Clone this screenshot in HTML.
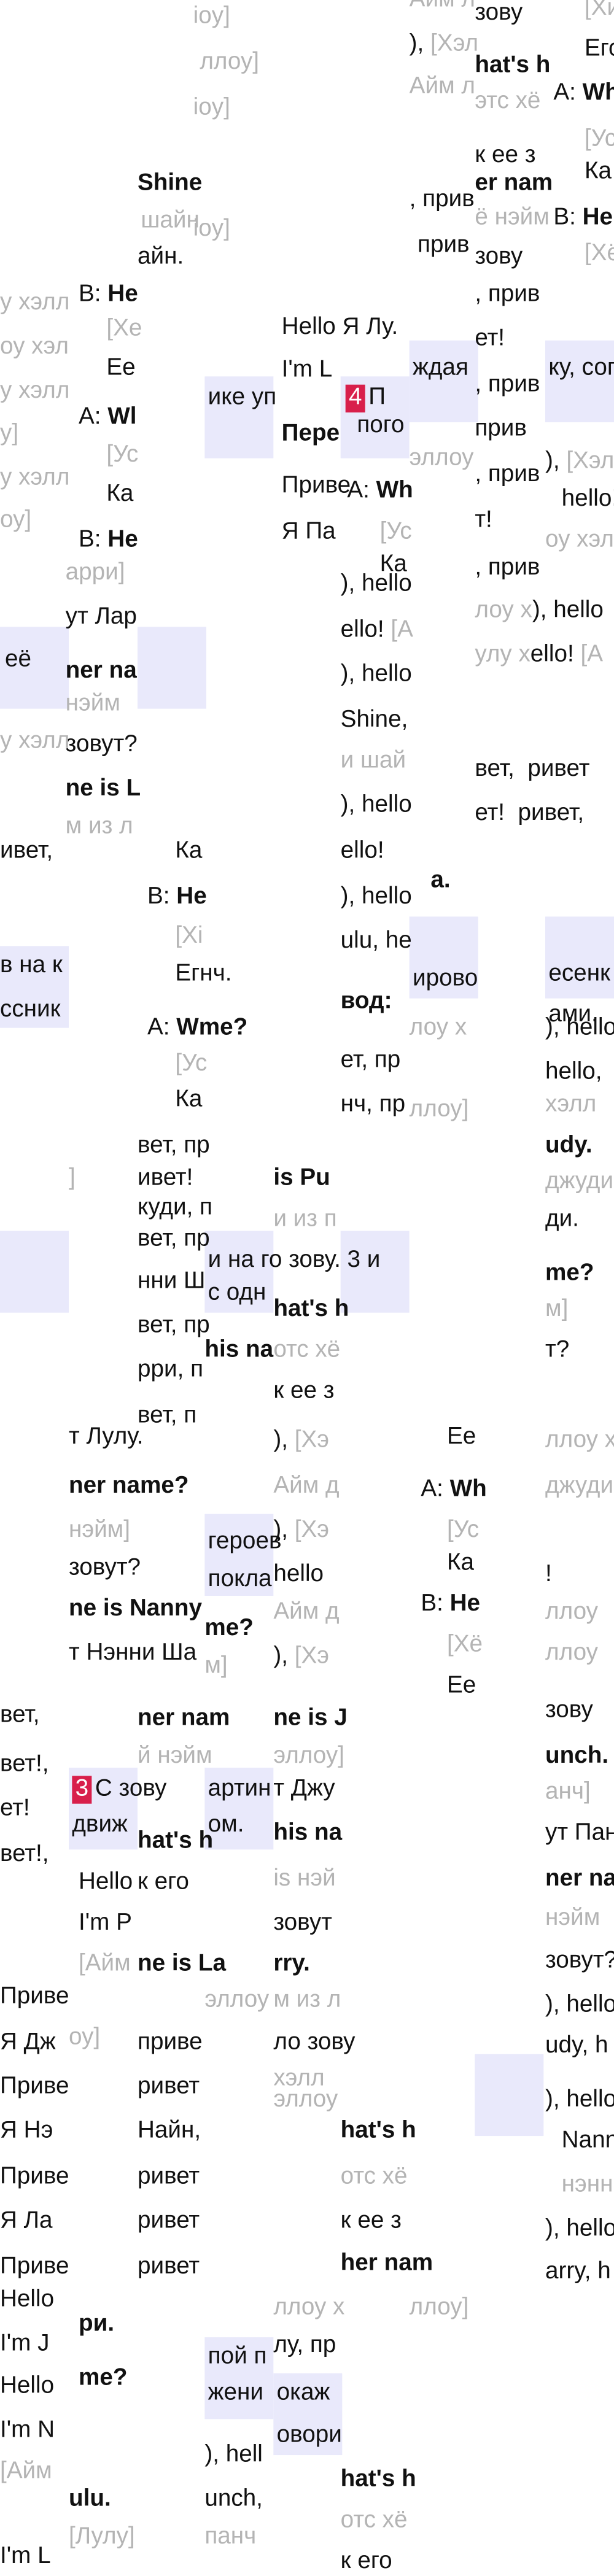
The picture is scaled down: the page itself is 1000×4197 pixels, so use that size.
<!DOCTYPE html>
<html><head><meta charset="utf-8"><style>
html,body{margin:0;padding:0;background:#fff;}
body{width:1000px;height:4178px;overflow:hidden;position:relative;}
#w{position:absolute;left:0;top:0;width:375px;height:1567px;transform:scale(2.6667);transform-origin:0 0;font-family:"Liberation Sans","Noto Sans CJK SC",sans-serif;font-size:14.5px;line-height:17px;color:#111;}
#w i{position:absolute;font-style:normal;white-space:nowrap;}
#w .g{color:#b4b4b4;}
#w .b{font-weight:bold;}
#w .bx{position:absolute;background:#e9e9fb;width:42px;height:50px;}
#w .r{display:inline-block;background:#d81f4b;color:#fff;padding:0 2px;margin-right:2px;}
</style></head><body><div id="w">
<div class="bx" style="left:0;top:383px"></div>
<div class="bx" style="left:84px;top:383px"></div>
<div class="bx" style="left:250px;top:208px"></div>
<div class="bx" style="left:333px;top:208px"></div>
<div class="bx" style="left:125px;top:230px"></div>
<div class="bx" style="left:208px;top:230px"></div>
<div class="bx" style="left:0;top:578px"></div>
<div class="bx" style="left:250px;top:560px"></div>
<div class="bx" style="left:333px;top:560px"></div>
<div class="bx" style="left:0;top:752px"></div>
<div class="bx" style="left:125px;top:752px"></div>
<div class="bx" style="left:208px;top:752px"></div>
<div class="bx" style="left:125px;top:925px"></div>
<div class="bx" style="left:42px;top:1080px"></div>
<div class="bx" style="left:125px;top:1080px"></div>
<div class="bx" style="left:290px;top:1255px"></div>
<div class="bx" style="left:125px;top:1428px"></div>
<div class="bx" style="left:167px;top:1450px"></div>

<i class="g" style="left:118px;top:2px">ioy]</i>
<i class="g" style="left:122px;top:30px">ллоу]</i>
<i class="g" style="left:118px;top:58px">ioy]</i>
<i class="b" style="left:84px;top:104px">Shine</i>
<i class="g" style="left:86px;top:127px">шайн</i>
<i class="g" style="left:118px;top:132px">ioy]</i>
<i style="left:84px;top:149px">айн.</i>
<i style="left:48px;top:172px">B: <b>He</b></i>
<i class="g" style="left:65px;top:193px">[Хе</i>
<i style="left:65px;top:217px">Ее</i>
<i style="left:48px;top:247px">A: <b>Wl</b></i>
<i class="g" style="left:65px;top:270px">[Ус</i>
<i style="left:65px;top:294px">Ка</i>
<i style="left:48px;top:322px">B: <b>He</b></i>
<i class="g" style="left:40px;top:342px">арри]</i>
<i style="left:40px;top:369px">ут Лар</i>
<i style="left:3px;top:395px">её</i>
<i class="b" style="left:40px;top:402px">ner na</i>
<i class="g" style="left:40px;top:422px">нэйм</i>
<i style="left:40px;top:447px">зовут?</i>
<i class="b" style="left:40px;top:474px">ne is L</i>
<i class="g" style="left:40px;top:497px">м из л</i>
<i class="g" style="left:0;top:177px">у хэлл</i>
<i class="g" style="left:0;top:204px">оу хэл</i>
<i class="g" style="left:0;top:231px">у хэлл</i>
<i class="g" style="left:0;top:257px">у]</i>
<i class="g" style="left:0;top:284px">у хэлл</i>
<i class="g" style="left:0;top:310px">оу]</i>
<i class="g" style="left:0;top:445px">у хэлл</i>

<i class="g" style="left:250px;top:-8px">Айм л</i>
<i style="left:290px;top:0">зову</i>
<i class="g" style="left:357px;top:-3px">[Хи</i>
<i style="left:250px;top:19px">), <span class="g">[Хэл</span></i>
<i style="left:357px;top:22px">Его</i>
<i class="b" style="left:290px;top:32px">hat's h</i>
<i class="g" style="left:250px;top:45px">Айм л</i>
<i class="g" style="left:290px;top:54px">этс хё</i>
<i style="left:338px;top:49px">A: <b>Wh</b></i>
<i class="g" style="left:357px;top:77px">[Ус</i>
<i style="left:290px;top:87px">к ее з</i>
<i style="left:357px;top:97px">Ка</i>
<i class="b" style="left:290px;top:104px">er nam</i>
<i style="left:250px;top:114px">, прив</i>
<i class="g" style="left:290px;top:125px">ё нэйм</i>
<i style="left:338px;top:125px">B: <b>He</b></i>
<i style="left:255px;top:142px">прив</i>
<i style="left:290px;top:149px">зову</i>
<i class="g" style="left:357px;top:147px">[Хё</i>
<i style="left:290px;top:172px">, прив</i>
<i style="left:172px;top:192px">Hello Я Лу.</i>
<i style="left:290px;top:199px">ет!</i>
<i style="left:172px;top:218px">I'm L</i>
<i style="left:252px;top:217px">ждая</i>
<i style="left:335px;top:217px">ку, сог</i>
<i style="left:127px;top:235px">ике уп</i>
<i style="left:211px;top:235px"><span class="r">4</span>П</i>
<i style="left:218px;top:252px">пого</i>
<i style="left:290px;top:227px">, прив</i>
<i style="left:290px;top:254px">прив</i>
<i class="b" style="left:172px;top:257px">Пере</i>
<i class="g" style="left:250px;top:272px">эллоу</i>
<i style="left:333px;top:274px">), <span class="g">[Хэл</span></i>
<i style="left:290px;top:282px">, прив</i>
<i style="left:172px;top:289px">Приве</i>
<i style="left:212px;top:292px">A: <b>Wh</b></i>
<i style="left:343px;top:297px">hello!</i>
<i style="left:290px;top:310px">т!</i>
<i style="left:172px;top:317px">Я Па</i>
<i class="g" style="left:232px;top:317px">[Ус</i>
<i class="g" style="left:333px;top:322px">оу хэл</i>
<i style="left:232px;top:337px">Ка</i>
<i style="left:290px;top:339px">, прив</i>
<i style="left:208px;top:349px">), hello</i>
<i style="left:290px;top:365px"><span class="g">лоу х</span>), hello</i>
<i style="left:208px;top:377px">ello! <span class="g">[А</span></i>
<i style="left:290px;top:392px"><span class="g">улу х</span>ello! <span class="g">[А</span></i>
<i style="left:208px;top:404px">), hello</i>
<i style="left:208px;top:432px">Shine,</i>
<i class="g" style="left:208px;top:457px">и шай</i>
<i style="left:290px;top:462px">вет, &nbsp;ривет</i>
<i style="left:208px;top:484px">), hello</i>
<i style="left:290px;top:489px">ет! &nbsp;ривет,</i>
<i style="left:208px;top:512px">ello!</i>
<i class="b" style="left:263px;top:530px">а.</i>

<i style="left:0;top:512px">ивет,</i>
<i style="left:107px;top:512px">Ка</i>
<i style="left:208px;top:540px">), hello</i>
<i style="left:90px;top:540px">B: <b>He</b></i>
<i class="g" style="left:107px;top:564px">[Хі</i>
<i style="left:208px;top:567px">ulu, he</i>
<i style="left:107px;top:587px">Егнч.</i>
<i style="left:0;top:582px">в на к</i>
<i style="left:0;top:609px">ссник</i>
<i style="left:252px;top:590px">ирово</i>
<i style="left:335px;top:587px">есенк</i>
<i style="left:335px;top:612px">ами.</i>
<i class="b" style="left:208px;top:604px">вод:</i>
<i style="left:90px;top:620px">A: <b>Wme?</b></i>
<i class="g" style="left:250px;top:620px">лоу х</i>
<i style="left:333px;top:620px">), hello</i>
<i class="g" style="left:107px;top:642px">[Ус</i>
<i style="left:208px;top:640px">ет, пр</i>
<i style="left:333px;top:647px">hello,</i>
<i style="left:107px;top:664px">Ка</i>
<i style="left:208px;top:667px">нч, пр</i>
<i class="g" style="left:250px;top:670px">ллоу]</i>
<i class="g" style="left:333px;top:667px">хэлл</i>
<i class="g" style="left:42px;top:712px">]</i>
<i style="left:84px;top:692px">вет, пр</i>
<i class="b" style="left:333px;top:692px">udy.</i>
<i style="left:84px;top:712px">ивет!</i>
<i class="b" style="left:167px;top:712px">is Pu</i>
<i class="g" style="left:333px;top:714px">джуди</i>
<i style="left:84px;top:730px">куди, п</i>
<i class="g" style="left:167px;top:737px">и из п</i>
<i style="left:333px;top:737px">ди.</i>
<i style="left:127px;top:762px">и на го зову. 3 и</i>
<i style="left:127px;top:782px">с одн</i>
<i style="left:84px;top:749px">вет, пр</i>
<i class="b" style="left:333px;top:770px">me?</i>
<i style="left:84px;top:775px">нни Ш</i>
<i class="b" style="left:167px;top:792px">hat's h</i>
<i class="g" style="left:333px;top:792px">м]</i>
<i style="left:84px;top:802px">вет, пр</i>
<i class="b" style="left:125px;top:817px">his na</i>
<i class="g" style="left:167px;top:817px">отс хё</i>
<i style="left:333px;top:817px">т?</i>
<i style="left:84px;top:829px">рри, п</i>
<i style="left:167px;top:842px">к ее з</i>
<i style="left:84px;top:857px">вет, п</i>
<i style="left:42px;top:870px">т Лулу.</i>
<i style="left:167px;top:872px">), <span class="g">[Хэ</span></i>
<i style="left:273px;top:870px">Ее</i>
<i class="g" style="left:333px;top:872px">ллоу х</i>
<i class="b" style="left:42px;top:900px">ner name?</i>
<i class="g" style="left:167px;top:900px">Айм д</i>
<i style="left:257px;top:902px">A: <b>Wh</b></i>
<i class="g" style="left:333px;top:900px">джуди</i>
<i style="left:127px;top:934px">героев</i>
<i style="left:127px;top:957px">покла</i>
<i class="g" style="left:42px;top:927px">нэйм]</i>
<i style="left:167px;top:927px">), <span class="g">[Хэ</span></i>
<i class="g" style="left:273px;top:927px">[Ус</i>
<i style="left:42px;top:950px">зовут?</i>
<i style="left:167px;top:954px">hello</i>
<i style="left:273px;top:947px">Ка</i>
<i style="left:333px;top:954px">!</i>
<i class="b" style="left:42px;top:975px">ne is Nanny</i>
<i class="b" style="left:125px;top:987px">me?</i>
<i class="g" style="left:167px;top:977px">Айм д</i>
<i style="left:257px;top:972px">B: <b>He</b></i>
<i class="g" style="left:333px;top:977px">ллоу</i>
<i style="left:42px;top:1002px">т Нэнни Ша</i>
<i class="g" style="left:125px;top:1010px">м]</i>
<i style="left:167px;top:1004px">), <span class="g">[Хэ</span></i>
<i class="g" style="left:273px;top:997px">[Хё</i>
<i class="g" style="left:333px;top:1002px">ллоу</i>
<i style="left:273px;top:1022px">Ее</i>
<i style="left:0;top:1040px">вет,</i>
<i class="b" style="left:84px;top:1042px">ner nam</i>
<i class="b" style="left:167px;top:1042px">ne is J</i>
<i style="left:333px;top:1037px">зову</i>
<i class="g" style="left:84px;top:1065px">й нэйм</i>
<i class="g" style="left:167px;top:1065px">эллоу]</i>
<i class="b" style="left:333px;top:1065px">unch.</i>
<i style="left:0;top:1070px">вет!,</i>
<i style="left:44px;top:1085px"><span class="r">3</span>С зову</i>
<i style="left:44px;top:1107px">движ</i>
<i style="left:167px;top:1085px">т Джу</i>
<i class="g" style="left:333px;top:1087px">анч]</i>
<i style="left:0;top:1097px">ет!</i>
<i style="left:127px;top:1085px">артин</i>
<i style="left:127px;top:1107px">ом.</i>
<i class="b" style="left:167px;top:1112px">his na</i>
<i style="left:333px;top:1112px">ут Пан</i>
<i style="left:0;top:1125px">вет!,</i>
<i class="b" style="left:84px;top:1117px">hat's h</i>
<i style="left:48px;top:1142px">Hello</i>
<i style="left:84px;top:1142px">к его</i>
<i class="g" style="left:167px;top:1140px">is нэй</i>
<i class="b" style="left:333px;top:1140px">ner na</i>
<i style="left:48px;top:1167px">I'm P</i>
<i style="left:167px;top:1167px">зовут</i>
<i class="g" style="left:333px;top:1164px">нэйм</i>
<i class="g" style="left:48px;top:1192px">[Айм</i>
<i class="b" style="left:84px;top:1192px">ne is La</i>
<i class="b" style="left:167px;top:1192px">rry.</i>
<i style="left:333px;top:1190px">зовут?</i>
<i style="left:0;top:1212px">Приве</i>
<i class="g" style="left:125px;top:1214px">эллоу</i>
<i class="g" style="left:167px;top:1214px">м из л</i>
<i style="left:333px;top:1217px">), hello</i>
<i class="g" style="left:42px;top:1237px">оу]</i>
<i style="left:0;top:1240px">Я Дж</i>
<i style="left:84px;top:1240px">приве</i>
<i style="left:167px;top:1240px">ло зову</i>
<i style="left:333px;top:1242px">udy, h</i>
<i class="g" style="left:167px;top:1262px">хэлл</i>
<i style="left:0;top:1267px">Приве</i>
<i style="left:84px;top:1267px">ривет</i>
<i class="g" style="left:167px;top:1275px">эллоу</i>
<i style="left:333px;top:1275px">), hello</i>
<i style="left:0;top:1294px">Я Нэ</i>
<i style="left:84px;top:1294px">Найн,</i>
<i class="b" style="left:208px;top:1294px">hat's h</i>
<i style="left:343px;top:1300px">Nanny</i>
<i style="left:0;top:1322px">Приве</i>
<i style="left:84px;top:1322px">ривет</i>
<i class="g" style="left:208px;top:1322px">отс хё</i>
<i class="g" style="left:343px;top:1327px">нэнн</i>
<i style="left:0;top:1349px">Я Ла</i>
<i style="left:84px;top:1349px">ривет</i>
<i style="left:208px;top:1349px">к ее з</i>
<i style="left:333px;top:1354px">), hello</i>
<i style="left:0;top:1377px">Приве</i>
<i style="left:84px;top:1377px">ривет</i>
<i class="b" style="left:208px;top:1375px">her nam</i>
<i style="left:333px;top:1380px">arry, h</i>
<i class="g" style="left:250px;top:1402px">ллоу]</i>
<i class="b" style="left:48px;top:1412px">ри.</i>
<i class="g" style="left:167px;top:1402px">ллоу х</i>
<i style="left:167px;top:1425px">лу, пр</i>
<i style="left:0;top:1397px">Hello</i>
<i style="left:0;top:1424px">I'm J</i>
<i class="b" style="left:48px;top:1445px">me?</i>
<i style="left:127px;top:1432px">пой п</i>
<i style="left:127px;top:1454px">жени</i>
<i style="left:169px;top:1454px">окаж</i>
<i style="left:169px;top:1480px">овори</i>
<i style="left:0;top:1450px">Hello</i>
<i style="left:0;top:1477px">I'm N</i>
<i style="left:125px;top:1492px">), hell</i>
<i style="left:125px;top:1519px">unch,</i>
<i class="g" style="left:0;top:1502px">[Айм</i>
<i class="b" style="left:42px;top:1519px">ulu.</i>
<i class="b" style="left:208px;top:1507px">hat's h</i>
<i class="g" style="left:42px;top:1542px">[Лулу]</i>
<i class="g" style="left:125px;top:1542px">панч</i>
<i class="g" style="left:208px;top:1532px">отс хё</i>
<i style="left:0;top:1554px">I'm L</i>
<i style="left:208px;top:1557px">к его</i>
</div></body></html>
